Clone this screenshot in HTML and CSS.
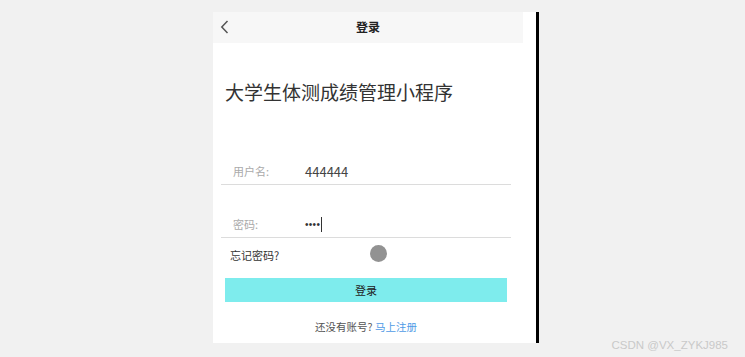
FILE: index.html
```html
<!DOCTYPE html>
<html lang="zh-CN">
<head>
  <meta charset="UTF-8">
  <meta name="viewport" content="width=device-width, initial-scale=1.0">
  <title>登录</title>
  <link rel="stylesheet" href="styles.css">
</head>
<body>
  <div class="phone">
    <div class="navbar">
      <span class="back">
        <svg width="9" height="14" viewBox="0 0 9 14"><path d="M7.5 1 L1.8 7 L7.5 13" fill="none" stroke="#555" stroke-width="1.5"/></svg>
      </span>
      <span class="navTitle">登录</span>
      <span></span>
    </div>

    <h1 class="appTitle">大学生体测成绩管理小程序</h1>

    <div class="field first">
      <span class="label">用户名:</span>
      <span class="value">444444</span>
    </div>
    <div class="field">
      <span class="label">密码:</span>
      <span class="value dots">••••</span><span class="caret"></span>
    </div>

    <div class="forgot">
      忘记密码?
      <span class="touch"></span>
    </div>

    <button class="loginBtn">登录</button>

    <p class="register">还没有账号? <a href="#">马上注册</a></p>
  </div>

  <div class="watermark">CSDN @VX_ZYKJ985</div>
</body>
</html>
```

FILE: styles.css
```css
body {
  margin: 0;
  padding: 12px 0 0 213px;
  height: 357px;
  box-sizing: border-box;
  background: #f1f1f1;
  font-family: "Noto Sans CJK SC", "Noto Sans", sans-serif;
  color: #333;
  overflow: hidden;
}
.phone {
  width: 323px;
  height: 331px;
  background: #fff;
  border-right: 3px solid #000;
}
.navbar {
  width: 310px;
  height: 31px;
  background: #f7f7f7;
  display: grid;
  grid-template-columns: 1fr auto 1fr;
  align-items: center;
}
.back {
  display: flex;
  padding-left: 7px;
  margin-top: -2px;
}
.navTitle {
  font-size: 12px;
  font-weight: bold;
  color: #222;
  margin-top: -2px;
}
.appTitle {
  margin: 36px 0 0 12px;
  font-size: 19px;
  line-height: 26px;
  font-weight: normal;
  color: #333;
}
.field {
  display: flex;
  align-items: center;
  height: 26px;
  width: 290px;
  margin: 26px 0 0 8px;
  border-bottom: 1px solid #dcdcdc;
}
.field.first {
  margin-top: 53px;
}
.label {
  width: 72px;
  padding-left: 12px;
  font-size: 11px;
  color: #aaa;
}
.value {
  font-size: 13px;
  color: #444;
}
.dots {
  font-family: "Liberation Sans", sans-serif;
  font-size: 10px;
  letter-spacing: 0.3px;
  color: #333;
}
.caret {
  width: 1px;
  height: 15px;
  margin-left: 1px;
  background: #333;
}
.forgot {
  position: relative;
  height: 34px;
  line-height: 34px;
  padding-left: 17px;
  font-size: 11px;
  color: #333;
}
.touch {
  position: absolute;
  left: 157px;
  top: 7px;
  width: 17px;
  height: 17px;
  border-radius: 50%;
  background: #929292;
  filter: blur(0.6px);
}
.loginBtn {
  display: block;
  width: 282px;
  height: 24px;
  margin: 6px 0 0 12px;
  border: none;
  padding: 0;
  background: #7eeced;
  font-family: inherit;
  font-size: 11px;
  color: #222;
}
.register {
  width: 282px;
  margin: 16px 0 0 12px;
  line-height: 18px;
  text-align: center;
  font-size: 10.5px;
  color: #555;
}
.register a {
  color: #4f9be6;
  text-decoration: none;
}
.watermark {
  position: absolute;
  right: 17px;
  bottom: 6px;
  font-family: "Liberation Sans", sans-serif;
  font-size: 11.5px;
  color: #c9c9c9;
}
```
